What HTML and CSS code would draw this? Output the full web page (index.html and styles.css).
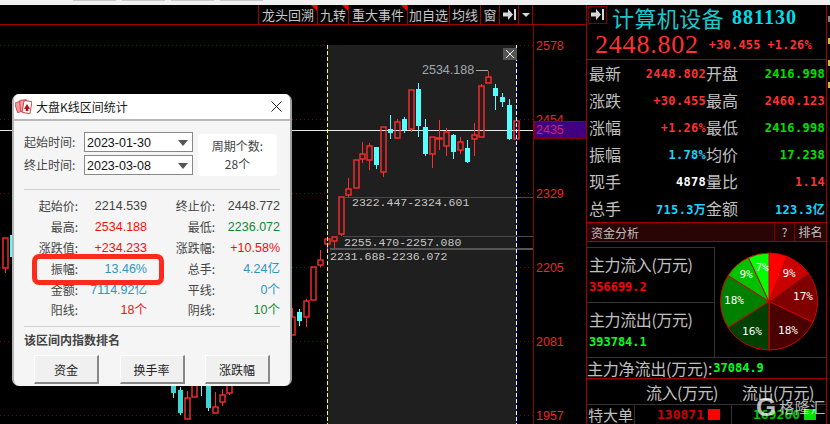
FILE: index.html
```html
<!DOCTYPE html>
<html>
<head>
  <meta charset="UTF-8">
  <title>大盘K线区间统计</title>
  <link rel="stylesheet" href="styles.css">
</head>
<body>
  <div class="screen">
    <div class="top_strip">
      <span class="top_tab"></span>
      <span class="top_tab"></span>
      <span class="top_tab"></span>
      <span class="top_tab"></span>
    </div>
    <div class="main">
      <div class="chart_area">
        <div class="toolbar">
          <span class="tool tool_wide tool_flag">龙头回溯</span>
          <span class="tool tool_short tool_flag">九转</span>
          <span class="tool tool_wide tool_flag">重大事件</span>
          <span class="tool tool_mid">加自选</span>
          <span class="tool tool_short">均线</span>
          <span class="tool tool_icon">窗</span>
          <span class="tool tool_icon">
            <svg width="13" height="11" viewBox="0 0 13 11"><path class="arrow_icon" d="M0 3.500H5V0L10 5.500L5 11V7.500H0ZM11 0H13V11H11Z"/></svg>
          </span>
          <span class="tool tool_drop"><i class="drop_arrow"></i></span>
        </div>

        <svg class="chart" width="586" height="399" viewBox="0 25 586 399">
          <path class="grid_line" d="M0 45H533M0 119H327M516 119H533M0 193H327M516 193H533M0 267H327M516 267H533M0 341H327M516 341H533M0 415H327M516 415H533"/>
          <rect class="selection" x="327" y="45" width="189" height="379"/>
          <path class="grid_faint" d="M420 119H516"/>
          <path class="range_line" d="M345 197.500H533M343 236.500H533"/>
          <path class="range_line_thick" d="M330 248.500H533"/>
          <path class="cross_line" d="M0 130.500H533"/>

          <path class="wick_up" d="M341 234V236M348 178V189M348 195V197M362 142V154M362 159V163M369 143V146M369 160V170M383 172V177M397 119V122M397 138V139M411 129V132M432 154V168M439 120V150M446 128V132M446 146V156M460 137V142M460 150V154M474 123V135M474 139V156M481 84V86M488 71V77M516 139V141M334 241V248M327 244V252M320 250V260M320 265V267M306 299V301M306 317V327M292 308V317M5 268V273M187 391V398M215 392V407M222 389V395M222 402V406M229 393V395"/>
          <path class="wick_down" d="M376 165V169M390 115V129M390 133V139M404 117V119M404 130V133M418 83V89M418 126V137M425 119V127M425 154V156M453 134V135M453 152V159M467 140V148M467 162V163M495 84V88M495 96V110M502 93V97M502 102V107M509 99V105M509 139V140M299 309V312M299 321V326M173 393V398M180 387V390M180 413V415M201 386V396M208 408V411"/>

          <g class="candle_up">
            <rect x="3" y="238" width="5" height="30"/>
            <rect x="290" y="317" width="5" height="18"/>
            <rect x="304" y="301" width="5" height="16"/>
            <rect x="311" y="267" width="5" height="33"/>
            <rect x="318" y="260" width="5" height="5"/>
            <rect x="325" y="239" width="5" height="5"/>
            <rect x="332" y="237" width="5" height="4"/>
            <rect x="339" y="197" width="5" height="37"/>
            <rect x="346" y="189" width="5" height="6"/>
            <rect x="354" y="160" width="5" height="28"/>
            <rect x="360" y="154" width="5" height="5"/>
            <rect x="367" y="146" width="5" height="14"/>
            <rect x="381" y="127" width="5" height="45"/>
            <rect x="395" y="122" width="5" height="16"/>
            <rect x="409" y="90" width="5" height="39"/>
            <rect x="430" y="137" width="5" height="17"/>
            <rect x="436" y="138" width="6" height="1"/>
            <rect x="444" y="132" width="5" height="14"/>
            <rect x="458" y="142" width="5" height="8"/>
            <rect x="472" y="135" width="5" height="4"/>
            <rect x="479" y="86" width="5" height="51"/>
            <rect x="486" y="77" width="5" height="6"/>
            <rect x="514" y="121" width="5" height="18"/>
            <rect x="185" y="398" width="5" height="21"/>
            <rect x="192" y="370" width="5" height="27"/>
            <rect x="213" y="407" width="5" height="6"/>
            <rect x="220" y="395" width="5" height="7"/>
            <rect x="227" y="370" width="5" height="23"/>
          </g>
          <g class="candle_down">
            <rect x="10" y="235" width="3" height="22"/>
            <rect x="297" y="312" width="5" height="9"/>
            <rect x="374" y="147" width="5" height="18"/>
            <rect x="388" y="129" width="5" height="4"/>
            <rect x="402" y="119" width="5" height="11"/>
            <rect x="416" y="89" width="5" height="37"/>
            <rect x="423" y="127" width="5" height="27"/>
            <rect x="451" y="135" width="5" height="17"/>
            <rect x="465" y="148" width="5" height="14"/>
            <rect x="493" y="88" width="5" height="8"/>
            <rect x="500" y="97" width="5" height="5"/>
            <rect x="507" y="105" width="5" height="34"/>
          </g>
          <g class="candle_dim">
            <rect x="171" y="370" width="5" height="23"/>
            <rect x="178" y="390" width="5" height="23"/>
            <rect x="206" y="370" width="5" height="38"/>
          </g>

          <path class="sel_left" d="M327.500 45V424"/>
          <path class="sel_right_blue" d="M516.500 45V424"/>
          <path class="sel_right_white" d="M516.500 45V424"/>

          <rect class="sel_close" x="503" y="48" width="14" height="12"/>
          <path class="sel_close_x" d="M506 50L514 58M514 50L506 58"/>

          <text class="peak_text" x="422" y="74">2534.188</text>
          <path class="peak_arrow" d="M476 70.500H488"/>
          <text class="range_text" x="352" y="206">2322.447-2324.601</text>
          <text class="range_text" x="344" y="246">2255.470-2257.080</text>
          <text class="range_text" x="330" y="260">2231.688-2236.072</text>

          <path class="axis_line" d="M533.500 25V424"/>
          <text class="axis_text" x="536" y="50">2578</text>
          <text class="axis_text" x="536" y="124">2454</text>
          <rect class="price_box" x="534" y="121" width="52" height="17"/>
          <text class="price_text" x="536" y="134">2435</text>
          <text class="axis_text" x="536" y="198">2329</text>
          <text class="axis_text" x="536" y="272">2205</text>
          <text class="axis_text" x="536" y="346">2081</text>
          <text class="axis_text" x="536" y="420">1957</text>
        </svg>
      </div>

      <div class="info_panel">
        <div class="info_inner">
          <div class="stock_title">
            <span class="stock_arrow">
              <svg width="13" height="11" viewBox="0 0 13 11"><path class="arrow_icon" d="M0 3.500H5V0L10 5.500L5 11V7.500H0ZM11 0H13V11H11Z"/></svg>
            </span>
            <span class="stock_name">计算机设备</span>
            <span class="stock_code">881130</span>
          </div>
          <div class="stock_price">
            <span class="price_big">2448.802</span>
            <span class="price_change">+30.455</span>
            <span class="price_change">+1.26%</span>
          </div>

          <div class="quote_grid">
            <span class="quote_label">最新</span><span class="quote_value c_red">2448.802</span>
            <span class="quote_label">开盘</span><span class="quote_value c_green">2416.998</span>
            <span class="quote_label">涨跌</span><span class="quote_value c_red">+30.455</span>
            <span class="quote_label">最高</span><span class="quote_value c_red">2460.123</span>
            <span class="quote_label">涨幅</span><span class="quote_value c_red">+1.26%</span>
            <span class="quote_label">最低</span><span class="quote_value c_green">2416.998</span>
            <span class="quote_label">振幅</span><span class="quote_value c_cyan">1.78%</span>
            <span class="quote_label">均价</span><span class="quote_value c_green">17.238</span>
            <span class="quote_label">现手</span><span class="quote_value c_white">4878</span>
            <span class="quote_label">量比</span><span class="quote_value c_red">1.14</span>
            <span class="quote_label">总手</span><span class="quote_value c_cyan">715.3万</span>
            <span class="quote_label">金额</span><span class="quote_value c_cyan">123.3亿</span>
          </div>

          <div class="fund_bar">
            <span class="fund_title">资金分析</span>
            <span class="fund_btn fund_help">?</span>
            <span class="fund_btn fund_rank">排名</span>
          </div>

          <div class="fund_main">
            <div class="flow_col">
              <div class="flow_box">
                <div class="flow_name">主力流入(万元)</div>
                <div class="flow_value flow_in">356699.2</div>
              </div>
              <div class="flow_box">
                <div class="flow_name">主力流出(万元)</div>
                <div class="flow_value flow_out">393784.1</div>
              </div>
            </div>
            <svg class="pie" width="110" height="110" viewBox="716 247 110 110">
              <path class="pie_slice s1" d="M770 301.500L770 253A48.500 48.500 0 0 1 787.900 256.400Z"/>
              <path class="pie_slice s2" d="M770 301.500L787.900 256.400A48.500 48.500 0 0 1 809.200 273Z"/>
              <path class="pie_slice s3" d="M770 301.500L809.200 273A48.500 48.500 0 0 1 813.900 322.200Z"/>
              <path class="pie_slice s4" d="M770 301.500L813.900 322.200A48.500 48.500 0 0 1 770 350Z"/>
              <path class="pie_slice s5" d="M770 301.500L770 350A48.500 48.500 0 0 1 729.100 327.500Z"/>
              <path class="pie_slice s6" d="M770 301.500L729.100 327.500A48.500 48.500 0 0 1 729.100 275.500Z"/>
              <path class="pie_slice s7" d="M770 301.500L729.100 275.500A48.500 48.500 0 0 1 749.400 257.600Z"/>
              <path class="pie_slice s8" d="M770 301.500L749.400 257.600A48.500 48.500 0 0 1 770 253Z"/>
              <text class="pie_text" x="790" y="277">9%</text>
              <text class="pie_text" x="804" y="300">17%</text>
              <text class="pie_text" x="789" y="334">18%</text>
              <text class="pie_text" x="753" y="335">16%</text>
              <text class="pie_text" x="735" y="304">18%</text>
              <text class="pie_text" x="747" y="278">9%</text>
              <text class="pie_text" x="763" y="271">7%</text>
            </svg>
          </div>

          <div class="net_row">
            <span class="net_label">主力净流出(万元):</span><span class="flow_value flow_out">37084.9</span>
          </div>
          <div class="flow_head">
            <span class="head_in">流入(万元)</span>
            <span class="head_out">流出(万元)</span>
          </div>
          <div class="order_row">
            <span class="order_label">特大单</span>
            <span class="order_cell">
              <span class="order_value order_red">130871</span><i class="order_sq sq_red"></i>
            </span>
            <span class="order_cell order_cell_last">
              <span class="order_value order_green">169260</span><i class="order_sq sq_green"></i>
            </span>
          </div>
        </div>
        <div class="edge_strip">
          <i class="edge_mark edge_gray"></i>
          <i class="edge_mark edge_yellow"></i>
          <i class="edge_mark edge_yellow"></i>
          <i class="edge_mark edge_yellow"></i>
        </div>
      </div>
    </div>

    <div class="dialog">
      <div class="dialog_title">
        <svg class="dialog_icon" width="17" height="15" viewBox="0 0 17 15">
          <rect class="card card_back" x="1" y="3" width="7" height="10" rx="1" transform="rotate(-18 4 8)"/>
          <rect class="card card_back" x="5" y="1" width="7" height="11" rx="1" transform="rotate(-4 8 6)"/>
          <rect class="card" x="8" y="2" width="8" height="12" rx="1" transform="rotate(10 12 8)"/>
          <path class="card_spade" d="M12 5L15 10H13L13.500 12H10.500L11 10H9Z"/>
        </svg>
        <span class="dialog_name">大盘K线区间统计</span>
        <svg class="dialog_close" width="11" height="11" viewBox="0 0 11 11"><path d="M.5 .5L10.500 10.500M10.500 .5L.5 10.500"/></svg>
      </div>
      <div class="dialog_body">
        <div class="range_form">
          <div class="date_rows">
            <div class="date_row">
              <span class="date_label">起始时间:</span>
              <span class="date_select">2023-01-30<i class="select_arrow"></i></span>
            </div>
            <div class="date_row">
              <span class="date_label">终止时间:</span>
              <span class="date_select">2023-03-08<i class="select_arrow"></i></span>
            </div>
          </div>
          <div class="period_box">
            <span>周期个数:</span>
            <span>28个</span>
          </div>
        </div>

        <div class="stat_grid">
          <span class="stat_label">起始价:</span><span class="stat_value v_dark">2214.539</span>
          <span class="stat_label">终止价:</span><span class="stat_value v_dark">2448.772</span>
          <span class="stat_label">最高:</span><span class="stat_value v_red">2534.188</span>
          <span class="stat_label">最低:</span><span class="stat_value v_green">2236.072</span>
          <span class="stat_label">涨跌值:</span><span class="stat_value v_red">+234.233</span>
          <span class="stat_label">涨跌幅:</span><span class="stat_value v_red">+10.58%</span>
          <span class="stat_label">振幅:</span><span class="stat_value v_blue">13.46%</span>
          <span class="stat_label">总手:</span><span class="stat_value v_blue">4.24亿</span>
          <span class="stat_label">金额:</span><span class="stat_value v_blue">7114.92亿</span>
          <span class="stat_label">平线:</span><span class="stat_value v_blue">0个</span>
          <span class="stat_label">阳线:</span><span class="stat_value v_red">18个</span>
          <span class="stat_label">阴线:</span><span class="stat_value v_green">10个</span>
        </div>

        <div class="rank_title">该区间内指数排名</div>
        <div class="rank_buttons">
          <span class="rank_button">资金</span>
          <span class="rank_button">换手率</span>
          <span class="rank_button">涨跌幅</span>
        </div>
      </div>
      <div class="highlight"></div>
    </div>

    <div class="watermark"><span class="watermark_g">G</span><span class="watermark_text">格隆汇</span></div>
  </div>
</body>
</html>
```

FILE: styles.css
```css
body {
  margin: 0;
  background: #000;
  font-family: "Noto Sans CJK SC", "Liberation Sans", sans-serif;
}
i {
  display: block;
}
.screen {
  position: relative;
  width: 830px;
  height: 424px;
  overflow: hidden;
  background: #000;
}
.top_strip {
  height: 5px;
  background: #f0f0f0;
  display: flex;
  gap: 6px;
  padding-left: 73px;
}
.top_tab {
  width: 43px;
  height: 1px;
  background: #c8c8c8;
}
.main {
  display: flex;
  height: 419px;
}

/* chart */
.chart_area {
  width: 586px;
  flex: none;
}
.toolbar {
  height: 19px;
  display: flex;
  justify-content: flex-end;
  padding-right: 53px;
  border-bottom: 1px solid #a00000;
  box-sizing: content-box;
}
.tool {
  position: relative;
  display: flex;
  align-items: center;
  justify-content: center;
  box-sizing: border-box;
  border-left: 1px solid #a00000;
  font-size: 13px;
  color: #c8c8c8;
  line-height: 19px;
}
.tool_wide { width: 59px; }
.tool_short { width: 31px; }
.tool_mid { width: 42px; }
.tool_icon { width: 19px; }
.tool_drop {
  width: 15px;
  border-right: 1px solid #a00000;
}
.tool_flag::after {
  content: "";
  position: absolute;
  top: 0;
  right: 0;
  border-top: 6px solid #ff0000;
  border-left: 6px solid transparent;
}
.arrow_icon {
  fill: #d8d8d8;
}
.drop_arrow {
  border-top: 4px solid #d8d8d8;
  border-left: 4px solid transparent;
  border-right: 4px solid transparent;
}
.chart {
  display: block;
  shape-rendering: crispEdges;
}
.grid_line {
  fill: none;
  stroke: #800000;
  stroke-dasharray: 1 3;
}
.grid_faint {
  fill: none;
  stroke: #501010;
  stroke-dasharray: 1 3;
}
.selection {
  fill: #1f1f1f;
}
.range_line {
  fill: none;
  stroke: #4a4a4a;
}
.range_line_thick {
  fill: none;
  stroke: #555;
  stroke-width: 2;
}
.cross_line {
  fill: none;
  stroke: #e8e8e8;
}
.wick_up {
  fill: none;
  stroke: #ff2c2c;
}
.wick_down {
  fill: none;
  stroke: #54ffff;
}
.candle_up rect {
  fill: none;
  stroke: #ff2c2c;
  stroke-width: 1.400;
  shape-rendering: auto;
}
.candle_down rect {
  fill: #54ffff;
}
.candle_dim rect {
  fill: #3fd4d4;
}
.sel_left {
  fill: none;
  stroke: #ffff50;
  stroke-dasharray: 4 2;
}
.sel_right_blue {
  fill: none;
  stroke: #0000ff;
}
.sel_right_white {
  fill: none;
  stroke: #fff;
  stroke-dasharray: 4 2;
}
.sel_close {
  fill: #555;
}
.sel_close_x {
  fill: none;
  stroke: #eee;
  shape-rendering: auto;
}
.peak_text {
  font-family: "Liberation Sans", sans-serif;
  font-size: 12.500px;
  fill: #a0a8b0;
  shape-rendering: auto;
}
.peak_arrow {
  fill: none;
  stroke: #a8a8a8;
}
.range_text {
  font-family: "Liberation Mono", monospace;
  font-size: 11.500px;
  fill: #c8c8c8;
}
.axis_line {
  fill: none;
  stroke: #900000;
}
.axis_text {
  font-family: "Liberation Sans", sans-serif;
  font-size: 12.500px;
  fill: #e62828;
}
.price_box {
  fill: #400080;
  stroke: #900000;
}
.price_text {
  font-family: "Liberation Sans", sans-serif;
  font-size: 12.500px;
  fill: #d8206a;
}

/* right panel */
.info_panel {
  display: flex;
  flex: none;
  width: 244px;
  box-sizing: border-box;
  border-left: 1px solid #a00000;
}
.info_inner {
  width: 239px;
  flex: none;
  border-right: 1px solid #a00000;
}
.stock_title {
  height: 25px;
  display: flex;
  align-items: center;
  padding-left: 1px;
}
.stock_arrow {
  width: 19px;
  height: 18px;
  margin-top: -6px;
  display: flex;
  align-items: center;
  justify-content: center;
  box-sizing: border-box;
  border: 1px solid #800000;
}
.stock_name {
  margin-left: 5px;
  font-size: 22px;
  line-height: 25px;
  color: #19c8cc;
  letter-spacing: .4px;
}
.stock_code {
  margin-left: 8px;
  font-family: "Liberation Serif", serif;
  font-weight: bold;
  font-size: 20px;
  letter-spacing: 1px;
  color: #00dcea;
}
.stock_price {
  height: 29px;
  display: flex;
  align-items: center;
  padding-left: 8px;
  border-bottom: 1px solid #a00000;
  color: #ff3232;
}
.price_big {
  font-family: "Liberation Serif", serif;
  font-size: 26px;
  letter-spacing: .8px;
  width: 116px;
}
.price_change {
  font-family: "DejaVu Sans Mono", monospace;
  font-weight: bold;
  font-size: 12px;
  letter-spacing: .2px;
  width: 62px;
}
.price_big + .price_change {
  margin-left: 4px;
}
.quote_grid {
  display: grid;
  grid-template-columns: 35px 82px 36px 83px;
  grid-auto-rows: 27px;
  align-items: center;
  height: 163px;
  padding-left: 2px;
  border-bottom: 1px solid #a00000;
  box-sizing: border-box;
}
.quote_label {
  font-size: 16px;
  color: #c0c0c0;
  line-height: 27px;
}
.quote_value {
  font-family: "DejaVu Sans Mono", "Noto Sans CJK SC", monospace;
  font-weight: bold;
  font-size: 12px;
  letter-spacing: .3px;
  text-align: right;
}
.c_red { color: #ff3232; }
.c_green { color: #00e000; }
.c_cyan { color: #19d4ff; }
.c_white { color: #fff; }
.fund_bar {
  height: 18px;
  display: flex;
  align-items: center;
  background: #2a0505;
  border-bottom: 1px solid #a00000;
  color: #c0c0c0;
}
.fund_title {
  flex: 1;
  padding-left: 4px;
  font-size: 12px;
}
.fund_btn {
  height: 18px;
  line-height: 18px;
  text-align: center;
  font-size: 12px;
  box-sizing: border-box;
  border-left: 1px solid #800000;
}
.fund_help { width: 20px; }
.fund_rank { width: 32px; }
.fund_main {
  display: flex;
  margin-top: 5px;
}
.flow_col {
  width: 128px;
  flex: none;
  box-sizing: border-box;
  border-right: 1px solid #333;
}
.flow_box {
  height: 55px;
  box-sizing: border-box;
  padding: 4px 0 0 2px;
  border-top: 1px solid #333;
}
.flow_name {
  font-size: 16px;
  line-height: 24px;
  letter-spacing: -.4px;
  color: #c0c0c0;
}
.flow_value {
  font-family: "DejaVu Sans Mono", monospace;
  font-weight: bold;
  font-size: 12px;
  line-height: 22px;
}
.flow_in { color: #f00; }
.flow_out { color: #00ff20; }
.pie {
  display: block;
}
.pie_slice {
  stroke: #d00000;
  stroke-width: 1;
}
.s1 { fill: #ff0000; }
.s2 { fill: #c80000; }
.s3 { fill: #800000; }
.s4 { fill: #4b0000; }
.s5 { fill: #004000; }
.s6 { fill: #008000; }
.s7 { fill: #00c000; }
.s8 { fill: #00ff00; }
.pie_text {
  font-family: "DejaVu Sans Mono", monospace;
  font-size: 11px;
  fill: #fff;
  text-anchor: middle;
}
.net_row {
  height: 22px;
  display: flex;
  align-items: center;
  box-sizing: border-box;
  border-top: 1px solid #333;
  border-bottom: 1px solid #a00000;
  white-space: nowrap;
}
.net_label {
  font-size: 16px;
  letter-spacing: -.2px;
  color: #c0c0c0;
  margin-right: 1px;
}
.flow_head {
  height: 25px;
  display: flex;
  align-items: center;
  font-size: 16px;
  letter-spacing: -.5px;
  color: #c0c0c0;
}
.head_in {
  margin-left: 59px;
  width: 96px;
}
.order_row {
  height: 19px;
  display: flex;
  align-items: center;
  border-top: 1px solid #333;
}
.order_label {
  width: 47px;
  flex: none;
  padding-left: 1px;
  box-sizing: border-box;
  font-size: 15px;
  line-height: 19px;
  color: #c0c0c0;
}
.order_cell {
  width: 97px;
  flex: none;
  height: 19px;
  display: flex;
  align-items: center;
  justify-content: flex-end;
  gap: 4px;
  padding-right: 11px;
  box-sizing: border-box;
  border-left: 1px solid #333;
}
.order_cell_last {
  width: 95px;
  padding-right: 10px;
}
.order_value {
  font-family: "DejaVu Sans Mono", monospace;
  font-weight: bold;
  font-size: 13px;
}
.order_red { color: #d00000; }
.order_green { color: #00c000; }
.order_sq {
  width: 12px;
  height: 11px;
}
.sq_red { background: #f00; }
.sq_green { background: #00e000; }
.edge_strip {
  flex: 1;
  display: flex;
  flex-direction: column;
  gap: 16px;
  padding: 11px 0 0 1px;
}
.edge_mark {
  height: 6px;
}
.edge_gray { background: #888; }
.edge_yellow { background: #c8c020; }

/* dialog */
.dialog {
  position: absolute;
  left: 12px;
  top: 94px;
  width: 280px;
  height: 292px;
  box-sizing: border-box;
  border-radius: 7px;
  background: #f5f5f5;
  overflow: hidden;
  color: #444;
  border-left: 2px solid #b4b4b4;
  border-right: 2px solid #a0a0a0;
}
.dialog_title {
  height: 25px;
  margin: 0 -2px;
  display: flex;
  align-items: center;
  background: #fff;
  border-bottom: 2px solid #b8b8b8;
  box-sizing: content-box;
}
.dialog_icon {
  margin-left: 3px;
  flex: none;
}
.card {
  fill: #fff;
  stroke: #d04848;
}
.card_back {
  fill: #f0a0a0;
}
.card_spade {
  fill: #b01010;
}
.dialog_name {
  margin-left: 4px;
  flex: 1;
  font-size: 12px;
  color: #1a1a1a;
}
.dialog_close {
  margin-right: 10px;
  flex: none;
}
.dialog_close path {
  fill: none;
  stroke: #222;
}
.dialog_body {
  padding: 11px 10px 0;
  font-size: 12px;
}
.range_form {
  display: flex;
  gap: 5px;
  padding-bottom: 13px;
  border-bottom: 1px solid #d0d0d0;
}
.date_rows {
  display: flex;
  flex-direction: column;
  gap: 3px;
}
.date_row {
  display: flex;
  align-items: center;
}
.date_label {
  width: 60px;
  line-height: 20px;
}
.date_select {
  position: relative;
  width: 109px;
  height: 20px;
  box-sizing: border-box;
  border: 1px solid #888;
  background: #fff;
  padding-left: 2px;
  font-family: "Liberation Sans", sans-serif;
  font-size: 12.500px;
  line-height: 20px;
  color: #111;
}
.select_arrow {
  position: absolute;
  right: 4px;
  top: 7px;
  border-top: 6px solid #555;
  border-left: 5px solid transparent;
  border-right: 5px solid transparent;
}
.period_box {
  width: 79px;
  height: 42px;
  margin-top: 2px;
  display: flex;
  flex-direction: column;
  align-items: center;
  justify-content: center;
  border-radius: 3px;
  background: #fff;
  line-height: 18px;
}
.stat_grid {
  display: grid;
  grid-template-columns: 54px 69px 68px 65px;
  grid-auto-rows: 20.800px;
  align-items: center;
  padding: 6px 0 5px;
  border-bottom: 1px solid #d0d0d0;
}
.stat_label {
  text-align: right;
  line-height: 20px;
}
.stat_value {
  text-align: right;
  font-family: "Liberation Sans", "Noto Sans CJK SC", sans-serif;
  font-size: 12.500px;
  line-height: 20px;
}
.v_dark { color: #444; }
.v_red { color: #f01010; }
.v_green { color: #108a30; }
.v_blue { color: #2b96c4; }
.rank_title {
  margin-top: 4px;
  font-weight: bold;
  line-height: 18px;
}
.rank_buttons {
  display: flex;
  gap: 20.500px;
  margin-top: 6px;
  padding-left: 10px;
}
.rank_button {
  width: 65px;
  height: 29px;
  box-sizing: border-box;
  text-align: center;
  line-height: 27px;
  color: #222;
  background: #f0f0f0;
  border-top: 1px solid #fff;
  border-left: 1px solid #fff;
  border-bottom: 2px solid #888;
  border-right: 2px solid #888;
}
.highlight {
  position: absolute;
  left: 18px;
  top: 160px;
  width: 132px;
  height: 31px;
  box-sizing: border-box;
  border: 5px solid #ff2a1f;
  border-radius: 7px;
}

/* watermark */
.watermark {
  position: absolute;
  left: 756px;
  top: 394px;
  display: flex;
  align-items: center;
  gap: 3px;
  color: rgba(255, 255, 255, .72);
}
.watermark_g {
  font-family: "Liberation Sans", sans-serif;
  font-weight: bold;
  font-size: 26px;
  line-height: 26px;
}
.watermark_text {
  font-size: 15px;
  letter-spacing: .5px;
  line-height: 24px;
}
```
